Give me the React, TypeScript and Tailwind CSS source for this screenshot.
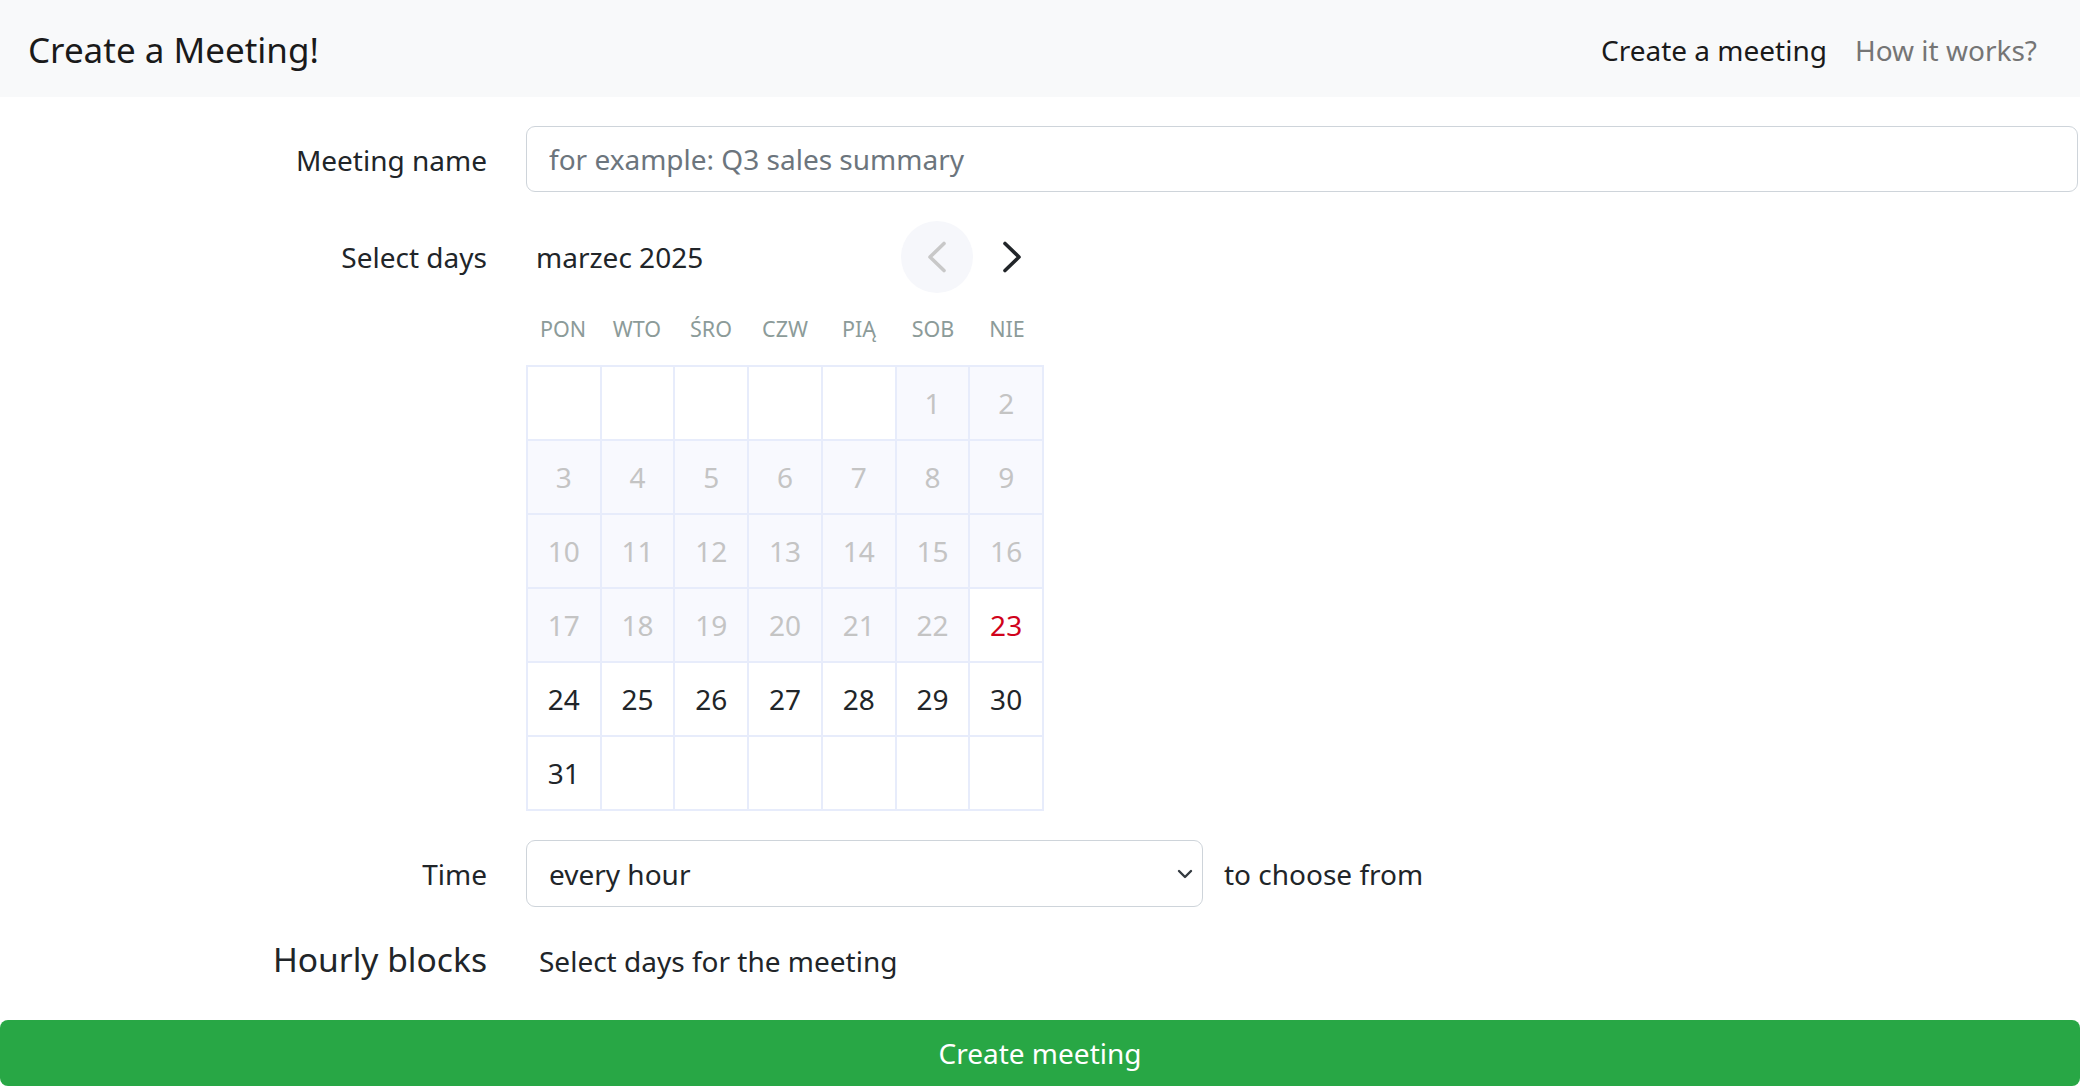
import { useState } from 'react';

const WEEKDAYS = ['PON', 'WTO', 'ŚRO', 'CZW', 'PIĄ', 'SOB', 'NIE'];
const TODAY = 23;

// marzec 2025 starts on saturday (index 5)
const cells: (number | null)[] = [
  ...Array(5).fill(null),
  ...Array.from({ length: 31 }, (_, i) => i + 1),
];
while (cells.length < 42) cells.push(null);

function ChevronLeft({ color }: { color: string }) {
  return (
    <svg width="20" height="32" viewBox="0 0 20 32" fill="none" stroke={color} strokeWidth="3.6" strokeLinecap="round" strokeLinejoin="round">
      <polyline points="17,2.5 3,16 17,29.5" />
    </svg>
  );
}

function ChevronRight({ color }: { color: string }) {
  return (
    <svg width="20" height="32" viewBox="0 0 20 32" fill="none" stroke={color} strokeWidth="3.6" strokeLinecap="round" strokeLinejoin="round">
      <polyline points="3,2.5 17,16 3,29.5" />
    </svg>
  );
}

function Calendar() {
  const [selected, setSelected] = useState<number[]>([]);

  const toggle = (d: number) =>
    setSelected((s) => (s.includes(d) ? s.filter((x) => x !== d) : [...s, d]));

  return (
    <div className="w-[518px]">
      <div className="flex h-[72px] items-center">
        <div className="w-[375px] shrink-0 pl-[10px] text-[28px] text-[#212529]">marzec 2025</div>
        <button className="flex h-[72px] w-[72px] shrink-0 items-center justify-center rounded-full bg-[#f6f7fb]" aria-label="Previous month">
          <ChevronLeft color="#c8c8c8" />
        </button>
        <button className="ml-[3px] flex h-[72px] w-[72px] shrink-0 items-center justify-center rounded-full" aria-label="Next month">
          <ChevronRight color="#212529" />
        </button>
      </div>
      <div className="grid h-[72px] grid-cols-7 items-center">
        {WEEKDAYS.map((w) => (
          <div key={w} className="text-center text-[21.5px] text-[#8c9b99]">
            {w}
          </div>
        ))}
      </div>
      <div className="grid grid-cols-7 gap-[2px] bg-[#e7ecfb] p-[2px]">
        {cells.map((d, i) => {
          const past = d !== null && d < TODAY;
          const today = d === TODAY;
          const isSel = d !== null && selected.includes(d);
          return (
            <div
              key={i}
              onClick={() => d !== null && !past && toggle(d)}
              className={
                'flex h-[72px] items-center justify-center text-[28px] ' +
                (past
                  ? 'bg-[#f8f9fe] text-[#c4c4c4]'
                  : isSel
                  ? 'bg-[#28a745] text-white'
                  : today
                  ? 'bg-white text-[#d0021b]'
                  : 'bg-white text-[#212529]')
              }
            >
              {d ?? ''}
            </div>
          );
        })}
      </div>
    </div>
  );
}

export default function App() {
  return (
    <div className="min-h-screen bg-white text-[#212529]" style={{ fontFamily: '"Noto Sans", "Open Sans", sans-serif' }}>
      <nav className="flex h-[97px] items-center justify-between bg-[#f8f9fa] pl-[28px] pr-[43px] pt-[4px]">
        <div className="text-[35px] text-[#1a1a1a]">Create a Meeting!</div>
        <div className="-mt-[2px] flex items-center gap-[28px] text-[28px]">
          <a className="text-[#1a1a1a]">Create a meeting</a>
          <a className="text-[#757575]">How it works?</a>
        </div>
      </nav>

      <div className="mt-[29px] flex h-[66px] items-center">
        <label className="w-[487px] pt-[2px] text-right text-[28px]">Meeting name</label>
        <input
          className="ml-[39px] mr-[2px] h-[66px] flex-1 rounded-[9px] border border-[#ced4da] px-[22px] text-[28px] text-[#212529] outline-none placeholder:text-[#6c757d]"
          placeholder="for example: Q3 sales summary"
        />
      </div>

      <div className="mt-[29px] flex items-start">
        <label className="flex h-[72px] w-[487px] items-center justify-end text-[28px]">Select days</label>
        <div className="ml-[39px]">
          <Calendar />
        </div>
      </div>

      <div className="mt-[29px] flex h-[67px] items-center">
        <label className="w-[487px] text-right text-[28px]">Time</label>
        <div className="relative ml-[39px] h-[67px] w-[677px]">
          <select className="h-full w-full appearance-none rounded-[9px] border border-[#ced4da] bg-white px-[22px] text-[28px] text-[#212529] outline-none">
            <option>every hour</option>
            <option>every 30 minutes</option>
            <option>every 15 minutes</option>
          </select>
          <svg className="pointer-events-none absolute right-[10px] top-[29px]" width="16" height="10" viewBox="0 0 16 10" fill="none" stroke="#343a40" strokeWidth="2.4" strokeLinecap="round" strokeLinejoin="round">
            <polyline points="2,2 8,8 14,2" />
          </svg>
        </div>
        <span className="ml-[21px] text-[28px]">to choose from</span>
      </div>

      <div className="mt-[30px] flex h-[44px] items-center">
        <h4 className="w-[487px] text-right text-[33.6px] leading-[1.2]">Hourly blocks</h4>
        <p className="ml-[52px] pt-[4px] text-[28px]">Select days for the meeting</p>
      </div>

      <button className="mt-[39px] flex h-[66px] w-full items-center justify-center rounded-[8px] bg-[#28a745] text-[28px] text-white">
        Create meeting
      </button>
    </div>
  );
}
